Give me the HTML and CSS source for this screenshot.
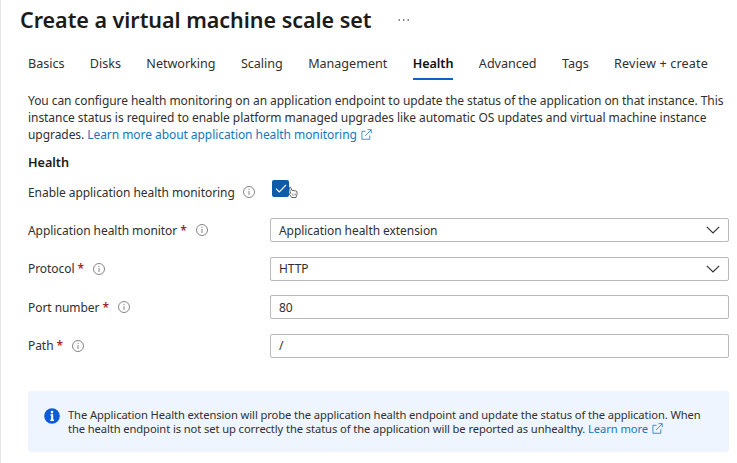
FILE: index.html
```html
<!DOCTYPE html>
<html lang="en">
<head>
<meta charset="utf-8">
<title>Create a virtual machine scale set</title>
<link rel="stylesheet" href="styles.css">
</head>
<body>
<svg class="defs" width="0" height="0">
  <symbol id="info" viewBox="0 0 12 12"><circle cx="6" cy="6" r="5.5" fill="none" stroke="#777" stroke-width=".9"/><path d="M6 5v4" stroke="#777" stroke-width=".9"/><circle cx="6" cy="3.3" r=".6" fill="#777"/></symbol>
  <symbol id="external" viewBox="0 0 12 12"><path d="M5 2.5H1v8.7h8.6V7M4.5 7.6L11 1M7.2.7h4v4" fill="none" stroke="currentColor" stroke-width=".85"/></symbol>
  <symbol id="chevron" viewBox="0 0 14 8"><path d="M.8.8L7 7 13.2.8" fill="none" stroke="#333" stroke-width="1.2"/></symbol>
</svg>
<main class="page">
  <header class="header">
    <h1 class="title">Create a virtual machine scale set</h1>
    <svg class="more" viewBox="0 0 12 2"><circle cx="1.2" cy="1" r=".8"/><circle cx="5.7" cy="1" r=".8"/><circle cx="10.2" cy="1" r=".8"/></svg>
  </header>
  <nav class="tabs">
    <a class="tab">Basics</a>
    <a class="tab">Disks</a>
    <a class="tab">Networking</a>
    <a class="tab">Scaling</a>
    <a class="tab">Management</a>
    <a class="tab tab-active">Health</a>
    <a class="tab">Advanced</a>
    <a class="tab">Tags</a>
    <a class="tab tab-last">Review + create</a>
  </nav>
  <p class="intro">You can configure health monitoring on an application endpoint to update the status of the application on that instance. This<br>instance status is required to enable platform managed upgrades like automatic OS updates and virtual machine instance<br>upgrades. <a class="link">Learn more about application health monitoring<svg class="external"><use href="#external"/></svg></a></p>
  <h2 class="section">Health</h2>
  <form class="form">
    <div class="row row-check">
      <label class="label">Enable application health monitoring<svg class="info"><use href="#info"/></svg></label>
      <span class="checkbox">
        <svg class="tick" viewBox="0 0 12 9"><path d="M1 4.7L4.3 8 11 1" fill="none" stroke="#fff" stroke-width="1.1"/></svg>
        <svg class="cursor" viewBox="0 0 10 13"><path d="M1.2 1.5Q2 .4 2.9 1.7L4 4.6 5 4.2 6.2 4.8 7.3 4.7 9 5.7V8.5L8 11.5H3.7L1 7.7Q1.2 6.6 2.6 7.3Z" fill="#fff" stroke="#444" stroke-width=".8"/><path d="M4.5 7.5v2M6 7.5v2M7.5 7.5v2" stroke="#666" stroke-width=".6"/></svg>
      </span>
    </div>
    <div class="row">
      <label class="label">Application health monitor <b class="req">*</b><svg class="info"><use href="#info"/></svg></label>
      <div class="field">Application health extension<svg class="chevron"><use href="#chevron"/></svg></div>
    </div>
    <div class="row">
      <label class="label">Protocol <b class="req">*</b><svg class="info"><use href="#info"/></svg></label>
      <div class="field">HTTP<svg class="chevron"><use href="#chevron"/></svg></div>
    </div>
    <div class="row">
      <label class="label">Port number <b class="req">*</b><svg class="info"><use href="#info"/></svg></label>
      <div class="field">80</div>
    </div>
    <div class="row">
      <label class="label">Path <b class="req">*</b><svg class="info"><use href="#info"/></svg></label>
      <div class="field">/</div>
    </div>
  </form>
  <aside class="notice">
    <svg class="notice-icon" viewBox="0 0 16 16"><circle cx="8" cy="8" r="7.8" fill="#0d5bd7"/><circle cx="8" cy="4.1" r="1.3" fill="#fff"/><path d="M6.5 7H8.2V12M6.3 12.2H10" stroke="#fff" stroke-width="1.4" fill="none"/><path d="M8.2 6.3V12.5" stroke="#fff" stroke-width="2"/></svg>
    <p class="notice-text">The Application Health extension will probe the application health endpoint and update the status of the application. When<br>the health endpoint is not set up correctly the status of the application will be reported as unhealthy. <a class="link">Learn more<svg class="external"><use href="#external"/></svg></a></p>
  </aside>
</main>
</body>
</html>
```
FILE: styles.css
```css
* { box-sizing: border-box; }
body { margin: 0; background: #fff; color: #303030; font: 12px/17px "Noto Sans", "Open Sans", sans-serif; letter-spacing: -.06px; }
h1, h2, p { margin: 0; }
.defs { position: absolute; }
.page { height: 463px; padding: 0 8px 0 27px; border-left: 1px solid #e6e6e6; overflow: hidden; white-space: nowrap; }
.header { display: flex; align-items: center; height: 40px; margin-left: -8px; }
.title { font-size: 21.5px; line-height: 40px; font-weight: 600; letter-spacing: -.03px; color: #1b1b1b; }
.more { width: 12px; height: 2px; margin-left: 26px; fill: #333; }
.tabs { display: flex; justify-content: space-between; width: 680px; height: 40px; padding-top: 12px; letter-spacing: -.03px; }
.tab { height: 28px; line-height: 24px; font-size: 12.6px; }
.tab-last { letter-spacing: .15px; }
.tab-active { color: #111; font-weight: 600; border-bottom: 2px solid #0f62c4; }
.intro { margin-top: 12px; }
.link { color: #1477bd; }
.external { width: 11px; height: 11px; margin-left: 4px; vertical-align: -1px; }
.section { margin-top: 10px; font-size: 12.7px; line-height: 18px; font-weight: 600; color: #1b1b1b; }
.form { display: flex; flex-direction: column; gap: 14.4px; margin-top: 9px; }
.row { display: grid; grid-template-columns: 242px 459px; height: 24px; align-items: center; }
.label { display: flex; align-items: center; white-space: pre; }
.info { width: 12px; height: 12px; margin-left: 9px; }
.row-check .info { margin-left: 8px; }
.req { color: #a4262c; font-weight: 600; }
.field { display: flex; align-items: center; justify-content: space-between; height: 24px; padding: 0 8px; border: 1px solid #b9b9b9; border-radius: 2px; }
.chevron { width: 14px; height: 8px; }
.checkbox { position: relative; display: flex; align-items: center; justify-content: center; width: 17px; height: 17px; margin: -7px 0 0 2px; border-radius: 2px; background: #0d5ba9; }
.tick { width: 12px; height: 9px; }
.cursor { position: absolute; left: 16px; top: 6px; width: 10px; height: 13px; }
.notice { display: flex; width: 701px; height: 61px; margin-top: 33px; padding: 17px 16px 0; border-radius: 3px; background: #eff5fe; }
.notice-icon { flex: none; width: 16px; height: 16px; margin-right: 8px; }
.notice-text { font-size: 11.2px; line-height: 14px; letter-spacing: -.1px; }
```
